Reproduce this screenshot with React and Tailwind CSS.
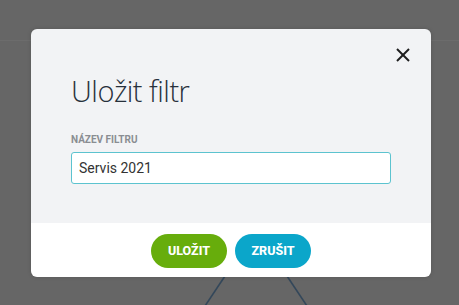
import React from "react";

export default function App() {
  return (
    <div className="relative w-[459px] h-[305px] overflow-hidden bg-[#666666] pt-[29px] pl-[31px]">
      <div className="absolute left-0 top-[40px] w-full h-px bg-[#6c6c6c]" />
      <svg className="absolute left-0 top-0" width="459" height="305" viewBox="0 0 459 305">
        <line x1="225" y1="276" x2="205" y2="306" stroke="#33475a" strokeWidth="1.6" />
        <line x1="287" y1="276" x2="307" y2="306" stroke="#33475a" strokeWidth="1.6" />
      </svg>
      <div className="relative w-[400px] h-[248px] rounded-[6px] overflow-hidden flex flex-col shadow-[0_0_4px_rgba(0,0,0,0.15)]">
        <div className="relative bg-[#f2f3f5] h-[194px] px-[40px] flex flex-col">
          <button className="absolute left-[365px] top-[19px] w-[14px] h-[14px]">
            <svg width="14" height="14" viewBox="0 0 14 14">
              <line x1="1" y1="1" x2="13" y2="13" stroke="#1e1e1e" strokeWidth="2" />
              <line x1="13" y1="1" x2="1" y2="13" stroke="#1e1e1e" strokeWidth="2" />
            </svg>
          </button>
          <h1 className="mt-[47px] text-[29px] leading-[29px] font-light tracking-[-0.5px] text-[#27303b] font-['Open_Sans',sans-serif]">
            Uložit filtr
          </h1>
          <div className="mt-[29px] text-[10px] leading-[12px] font-bold text-[#8a8d92] font-['Roboto',sans-serif]">
            NÁZEV FILTRU
          </div>
          <input
            className="mt-[6px] w-[320px] h-[32px] border border-[#5cc3cf] rounded-[3px] bg-white pl-[7px] text-[14px] text-[#333333] font-['Roboto',sans-serif] outline-none"
            defaultValue="Servis 2021"
            readOnly
          />
        </div>
        <div className="flex-1 bg-white flex justify-center items-start gap-[8px] pt-[11px]">
          <button className="w-[76px] h-[34px] rounded-full bg-[#67ad0c] text-white text-[12.5px] font-extrabold font-['Roboto',sans-serif]">
            ULOŽIT
          </button>
          <button className="w-[76px] h-[34px] rounded-full bg-[#0ba6ca] text-white text-[12.5px] font-extrabold font-['Roboto',sans-serif]">
            ZRUŠIT
          </button>
        </div>
      </div>
    </div>
  );
}
